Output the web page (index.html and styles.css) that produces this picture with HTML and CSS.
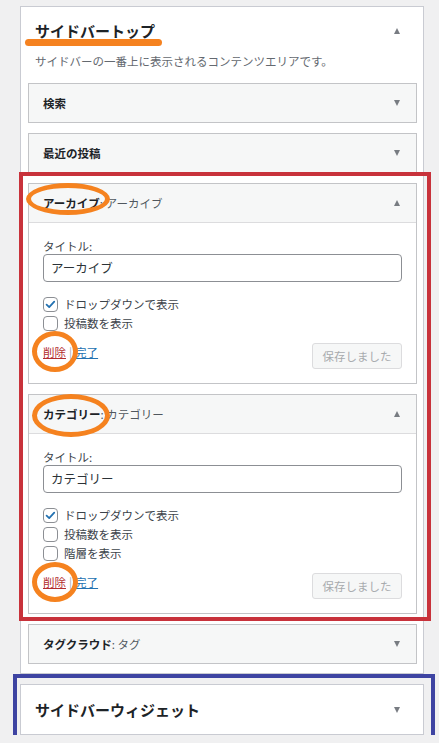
FILE: index.html
```html
<!DOCTYPE html>
<html lang="ja">
<head>
<meta charset="utf-8">
<title>ウィジェット</title>
<link rel="stylesheet" href="styles.css">
</head>
<body>
<div class="wrap">
  <section class="panel">
    <div class="panel-head">
      <h3 class="panel-title">サイドバートップ<span class="mark-underline"></span></h3>
      <span class="arrow up"></span>
    </div>
    <p class="desc">サイドバーの一番上に表示されるコンテンツエリアです。</p>
    <div class="widgets">
      <div class="widget">
        <div class="widget-head"><h4 class="widget-title">検索</h4><span class="arrow down"></span></div>
      </div>
      <div class="widget">
        <div class="widget-head"><h4 class="widget-title">最近の投稿</h4><span class="arrow down"></span></div>
      </div>
      <div class="highlight-red">
        <div class="widget open">
          <div class="widget-head">
            <h4 class="widget-title">アーカイブ<span class="sub">: アーカイブ</span></h4>
            <span class="arrow up"></span>
            <span class="ring ring-archive"></span>
          </div>
          <div class="widget-body">
            <label class="field-label">タイトル:</label>
            <div class="input">アーカイブ</div>
            <ul class="checks">
              <li><span class="cb checked"><svg viewBox="0 0 16 16" width="13" height="13"><path d="M3.2 8.2 L6.4 11.2 L12.6 4.4" fill="none" stroke="#2271b1" stroke-width="2.2" stroke-linecap="round" stroke-linejoin="round"/></svg></span>ドロップダウンで表示</li>
              <li><span class="cb"></span>投稿数を表示</li>
            </ul>
            <div class="actions">
              <div class="links"><a class="del">削除</a><span class="sep">|</span><a class="done">完了</a><span class="ring ring-del"></span></div>
              <span class="saved">保存しました</span>
            </div>
          </div>
        </div>
        <div class="widget open">
          <div class="widget-head">
            <h4 class="widget-title">カテゴリー<span class="sub">: カテゴリー</span></h4>
            <span class="arrow up"></span>
            <span class="ring ring-cat"></span>
          </div>
          <div class="widget-body">
            <label class="field-label">タイトル:</label>
            <div class="input">カテゴリー</div>
            <ul class="checks">
              <li><span class="cb checked"><svg viewBox="0 0 16 16" width="13" height="13"><path d="M3.2 8.2 L6.4 11.2 L12.6 4.4" fill="none" stroke="#2271b1" stroke-width="2.2" stroke-linecap="round" stroke-linejoin="round"/></svg></span>ドロップダウンで表示</li>
              <li><span class="cb"></span>投稿数を表示</li>
              <li><span class="cb"></span>階層を表示</li>
            </ul>
            <div class="actions">
              <div class="links"><a class="del">削除</a><span class="sep">|</span><a class="done">完了</a><span class="ring ring-del2"></span></div>
              <span class="saved">保存しました</span>
            </div>
          </div>
        </div>
      </div>
      <div class="widget">
        <div class="widget-head"><h4 class="widget-title">タグクラウド<span class="sub">: タグ</span></h4><span class="arrow down"></span></div>
      </div>
    </div>
  </section>

  <section class="panel panel-closed highlight-blue">
    <div class="panel-head closed">
      <h3 class="panel-title">サイドバーウィジェット</h3>
      <span class="arrow down"></span>
    </div>
  </section>
</div>
</body>
</html>
```

FILE: styles.css
```css
* { box-sizing: border-box; }
html, body {
  margin: 0;
  padding: 0;
  background: #f0f0f1;
}
body {
  font-family: "Noto Sans CJK JP", "Noto Sans", sans-serif;
  color: #1d2327;
  font-size: 11.5px;
}
.wrap {
  padding: 6px 0 0 20px;
  width: 424px;
}
.panel {
  background: #fff;
  border: 1px solid #c9cbd2;
  width: 404px;
  position: relative;
}
.panel-head {
  display: flex;
  justify-content: space-between;
  align-items: center;
  height: 34px;
  padding: 14px 23px 0 14px;
}
.panel-title {
  margin: 0;
  font-size: 15px;
  line-height: 20px;
  font-weight: 700;
  position: relative;
}
.mark-underline {
  position: absolute;
  left: -10px;
  top: 18px;
  width: 137px;
  height: 7px;
  border-radius: 4px;
  background: #f58220;
}
.desc {
  margin: 11px 14px 0;
  line-height: 18px;
  font-size: 11.5px;
  color: #646970;
}
.widgets {
  padding: 13px 6px 9px 7px;
  display: flex;
  flex-direction: column;
  gap: 10px;
}
.highlight-red {
  position: relative;
  display: flex;
  flex-direction: column;
  gap: 10px;
}
.highlight-red::after {
  content: "";
  position: absolute;
  left: -9px;
  right: -14px;
  top: -11px;
  bottom: -7px;
  border: 4px solid #c8323b;
  pointer-events: none;
}
.widget {
  border: 1px solid #c3c4c7;
  background: #f6f7f7;
}
.widget.open .widget-head {
  border-bottom: 1px solid #dcdcde;
}
.widget-head {
  height: 38px;
  display: flex;
  align-items: center;
  justify-content: space-between;
  padding: 0 16px 0 14px;
  position: relative;
}
.widget.open .widget-head { height: 39px; }
.widget-title {
  margin: 0;
  font-size: 11.5px;
  font-weight: 700;
  line-height: 16px;
}
.widget-title .sub {
  font-weight: 400;
  color: #50575e;
}
.arrow {
  width: 0;
  height: 0;
  border-left: 3.5px solid transparent;
  border-right: 3.5px solid transparent;
}
.arrow.up { border-bottom: 6px solid #787c82; }
.arrow.down { border-top: 6px solid #787c82; }
.widget-body {
  background: #fff;
  padding: 15px 14px 14px;
}
.field-label {
  display: block;
  line-height: 16px;
  font-size: 11.5px;
  color: #3c434a;
}
.input {
  height: 28px;
  border: 1px solid #8c8f94;
  border-radius: 4px;
  padding: 0 7px;
  line-height: 26px;
  font-size: 12.5px;
  color: #2c3338;
}
.checks {
  list-style: none;
  margin: 15px 0 0;
  padding: 0;
}
.checks li {
  height: 19px;
  display: flex;
  align-items: flex-start;
  line-height: 15px;
  font-size: 11.5px;
  color: #3c434a;
}
.cb {
  width: 15px;
  height: 15px;
  border: 1px solid #8c8f94;
  border-radius: 4px;
  background: #fff;
  margin-right: 6px;
  display: flex;
  align-items: center;
  justify-content: center;
  flex: none;
}
.actions {
  margin-top: 8px;
  display: flex;
  justify-content: space-between;
  align-items: flex-start;
}
.links {
  position: relative;
  line-height: 18px;
  font-size: 11.5px;
}
.del { color: #b32d2e; text-decoration: underline; }
.done { color: #2271b1; text-decoration: underline; }
.sep { color: #a7aaad; margin: 0 3px; }
.saved {
  width: 90px;
  height: 26px;
  border: 1px solid #dcdcde;
  border-radius: 3px;
  background: #f6f7f7;
  color: #a7aaad;
  font-size: 11.5px;
  line-height: 24px;
  text-align: center;
}
.ring {
  position: absolute;
  border: 5px solid #f5821f;
  border-radius: 50%;
  pointer-events: none;
}
.ring-archive { left: -3px; top: -1px; width: 84px; height: 32px; }
.ring-cat { left: 3px; top: -1px; width: 78px; height: 43px; }
.ring-del { left: -11px; top: -12px; width: 46px; height: 41px; }
.ring-del2 { left: -11px; top: -11px; width: 46px; height: 40px; }
.panel-closed {
  margin-top: 10px;
}
.panel-head.closed {
  height: 49px;
  padding: 0 23px 0 14px;
}
.highlight-blue::after {
  content: "";
  position: absolute;
  left: -8px;
  right: -12px;
  top: -11px;
  bottom: -5px;
  border: 4px solid #3e44a2;
  pointer-events: none;
}
```
